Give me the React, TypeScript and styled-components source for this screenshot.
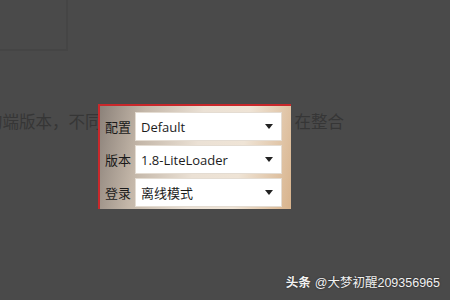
import styled, { createGlobalStyle } from 'styled-components';

const GlobalStyle = createGlobalStyle`
  html, body {
    margin: 0;
    padding: 0;
    background: #4a4a4a;
  }
  body {
    font-family: "Noto Sans", "Noto Sans CJK SC", sans-serif;
  }
`;

const Page = styled.div`
  position: relative;
  width: 450px;
  height: 300px;
  overflow: hidden;
  background: #4a4a4a;
`;

const TopFrame = styled.div`
  width: 66px;
  height: 49px;
  border-right: 2px solid #454545;
  border-bottom: 2px solid #454545;
`;

// article text behind the pasted screenshot; the middle part is covered by the panel
const BodyLine = styled.p`
  display: flex;
  gap: 193px;
  margin: 58px 0 0 -14px;
  white-space: nowrap;
  font-family: "Noto Sans CJK SC", sans-serif;
  font-size: 16.5px;
  line-height: 24px;
  color: #363636;
`;

const Panel = styled.div`
  position: absolute;
  left: 98px;
  top: 104px;
  width: 193px;
  height: 105px;
  border-left: 2px solid #c9282b;
  border-top: 2px solid #c9282b;
  background: linear-gradient(100deg, #8c827a 0%, #c4b7a9 22%, #ebe1d5 50%, #efe4d6 72%, #d8b38c 100%);
  padding: 6px 0 0 5px;
  box-sizing: border-box;
  display: flex;
  flex-direction: column;
  gap: 4px;
`;

const Row = styled.div`
  display: flex;
  align-items: center;
`;

const Label = styled.span`
  width: 30px;
  font-family: "Noto Sans CJK SC", sans-serif;
  font-size: 13px;
  color: #1a1a1a;
`;

const Select = styled.div`
  width: 147px;
  height: 29px;
  box-sizing: border-box;
  background: #fff;
  border: 1px solid #e4dcd2;
  display: flex;
  align-items: center;
  justify-content: space-between;
  padding: 0 8px 0 5px;
  font-family: "Open Sans", "Noto Sans CJK SC", sans-serif;
  font-size: 13px;
  color: #1c1c1c;
`;

const Arrow = styled.span`
  width: 0;
  height: 0;
  border-left: 4px solid transparent;
  border-right: 4px solid transparent;
  border-top: 5px solid #222;
`;

const Watermark = styled.div`
  position: absolute;
  right: 10px;
  bottom: 9px;
  font-family: "Liberation Sans", "Noto Sans CJK SC", sans-serif;
  font-size: 12.5px;
  color: #f2f2f2;
  text-shadow: 0 0 2px rgba(0, 0, 0, 0.6);
  white-space: nowrap;
`;

const Brand = styled.b`
  font-weight: 700;
  margin-right: 4px;
`;

const fields = [
  { label: '配置', value: 'Default' },
  { label: '版本', value: '1.8-LiteLoader' },
  { label: '登录', value: '离线模式' },
];

export default function App() {
  return (
    <Page>
      <GlobalStyle />
      <TopFrame />
      <BodyLine>
        <span>的端版本，不同</span>
        <span>在整合</span>
      </BodyLine>
      <Panel>
        {fields.map((f) => (
          <Row key={f.label}>
            <Label>{f.label}</Label>
            <Select>
              <span>{f.value}</span>
              <Arrow />
            </Select>
          </Row>
        ))}
      </Panel>
      <Watermark>
        <Brand>头条</Brand>@大梦初醒209356965
      </Watermark>
    </Page>
  );
}
